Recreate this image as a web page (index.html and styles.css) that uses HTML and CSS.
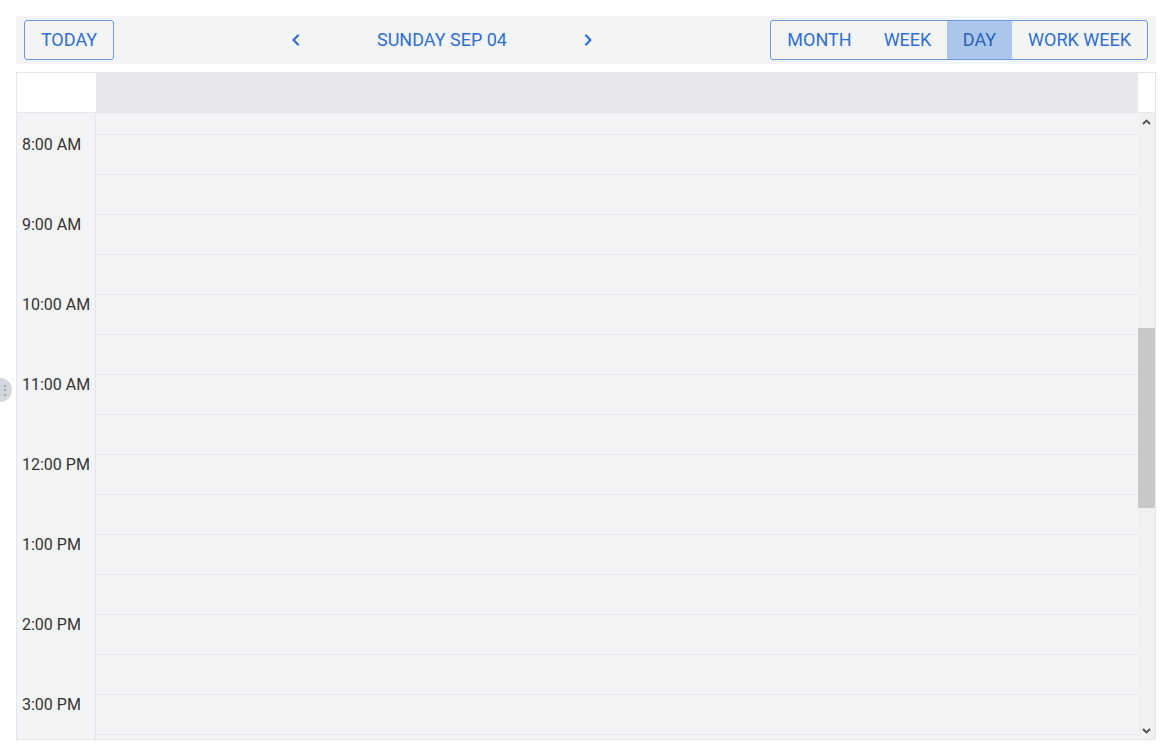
FILE: index.html
```html
<!DOCTYPE html>
<html>
<head>
<meta charset="utf-8">
<link rel="stylesheet" href="styles.css">
</head>
<body>
<div class="page">
  <div class="toolbar">
    <button class="btn today">TODAY</button>
    <div class="nav">
      <button class="navbtn" aria-label="Previous"><svg width="10" height="12" viewBox="0 0 10 12"><polyline points="7,1.5 2.5,6 7,10.5" fill="none" stroke="currentColor" stroke-width="2.2" stroke-linecap="round" stroke-linejoin="round"/></svg></button>
      <div class="title">SUNDAY SEP 04</div>
      <button class="navbtn" aria-label="Next"><svg width="10" height="12" viewBox="0 0 10 12"><polyline points="3,1.5 7.5,6 3,10.5" fill="none" stroke="currentColor" stroke-width="2.2" stroke-linecap="round" stroke-linejoin="round"/></svg></button>
    </div>
    <div class="views">
      <button class="view month">MONTH</button>
      <button class="view week">WEEK</button>
      <button class="view day active">DAY</button>
      <button class="view workweek">WORK WEEK</button>
    </div>
  </div>

  <div class="calendar">
    <div class="head">
      <div class="corner"></div>
      <div class="dayhead"></div>
      <div class="gutter"></div>
    </div>
    <div class="body">
      <div class="viewport">
        <div class="rows">
          <div class="times">
            <div class="halfcell"></div>
            <div class="hour"><span>8:00 AM</span></div>
            <div class="hour"><span>9:00 AM</span></div>
            <div class="hour"><span>10:00 AM</span></div>
            <div class="hour"><span>11:00 AM</span></div>
            <div class="hour"><span>12:00 PM</span></div>
            <div class="hour"><span>1:00 PM</span></div>
            <div class="hour"><span>2:00 PM</span></div>
            <div class="hour"><span>3:00 PM</span></div>
          </div>
          <div class="slots">
            <div class="slot"></div>
            <div class="slot"></div><div class="slot"></div>
            <div class="slot"></div><div class="slot"></div>
            <div class="slot"></div><div class="slot"></div>
            <div class="slot"></div><div class="slot"></div>
            <div class="slot"></div><div class="slot"></div>
            <div class="slot"></div><div class="slot"></div>
            <div class="slot"></div><div class="slot"></div>
            <div class="slot"></div><div class="slot"></div>
          </div>
        </div>
      </div>
      <div class="scrollbar">
        <div class="arrow"><svg width="9" height="6" viewBox="0 0 9 6"><polyline points="1,5 4.5,1.5 8,5" fill="none" stroke="#505050" stroke-width="1.8"/></svg></div>
        <div class="track"><div class="thumb"></div></div>
        <div class="arrow"><svg width="9" height="6" viewBox="0 0 9 6"><polyline points="1,1 4.5,4.5 8,1" fill="none" stroke="#505050" stroke-width="1.8"/></svg></div>
      </div>
    </div>
  </div>
  <div class="handle">&#8942;</div>
</div>
</body>
</html>
```

FILE: styles.css
```css
* { box-sizing: border-box; }
html, body { margin: 0; padding: 0; background: #ffffff; }
body { font-family: Roboto, "Liberation Sans", sans-serif; }

.page {
  position: relative;
  width: 1172px;
  height: 756px;
  padding: 16px;
  overflow: hidden;
}

.toolbar {
  height: 48px;
  background: #f3f4f6;
  display: flex;
  align-items: center;
  justify-content: space-between;
  padding: 0 8px;
}

button {
  font-family: inherit;
  cursor: pointer;
}

.btn.today {
  width: 90px;
  height: 40px;
  border: 1px solid #6c9ae0;
  border-radius: 3px;
  background: transparent;
  color: #2f6fd3;
  font-size: 18px;
  padding: 0 0 2px;
}

.nav {
  display: flex;
  align-items: center;
}
.navbtn {
  width: 32px;
  height: 32px;
  border: none;
  background: transparent;
  color: #2f6fd3;
  display: flex;
  align-items: center;
  justify-content: center;
  padding: 0;
}
.title {
  width: 260px;
  text-align: center;
  color: #2f6fd3;
  font-size: 18px;
  padding-bottom: 2px;
}

.views {
  display: flex;
  height: 40px;
  border: 1px solid #6c9ae0;
  border-radius: 3px;
  overflow: hidden;
}
.view {
  height: 100%;
  border: none;
  background: transparent;
  color: #2f6fd3;
  font-size: 18px;
  padding: 0 0 2px;
}
.view.month { width: 97px; }
.view.week { width: 79px; }
.view.day { width: 65px; }
.view.workweek { width: 135px; }
.view.active {
  background: #abc6ed;
  color: #2a62b8;
}

.calendar {
  margin-top: 8px;
  height: 668px;
  border: 1px solid #e5e7eb;
  display: flex;
  flex-direction: column;
}

.head {
  height: 40px;
  display: flex;
  border-bottom: 1px solid #e5e7eb;
  flex: none;
}
.corner { width: 79px; background: #ffffff; }
.dayhead { flex: 1; background: #e5e7eb; }
.gutter { width: 17px; background: #ffffff; }

.body {
  flex: 1;
  display: flex;
  min-height: 0;
}
.viewport {
  flex: 1;
  overflow: hidden;
  background: #f3f4f6;
}
.rows {
  display: flex;
  margin-top: -19px;
}
.times {
  width: 79px;
  border-right: 1px solid #e5e7eb;
  flex: none;
}
.halfcell { height: 40px; }
.hour {
  height: 80px;
  padding: 1px 0 0 5px;
  font-size: 16px;
  color: #333333;
  line-height: 19px;
}
.slots { flex: 1; }
.slot {
  height: 40px;
  border-top: 1px solid #e5e7eb;
}

.scrollbar {
  width: 17px;
  background: #f1f1f1;
  display: flex;
  flex-direction: column;
  flex: none;
}
.arrow {
  height: 17px;
  display: flex;
  align-items: center;
  justify-content: center;
  flex: none;
}
.track { flex: 1; }
.thumb {
  margin-top: 198px;
  height: 180px;
  background: #c8c8c8;
}

.handle {
  position: absolute;
  left: -12px;
  top: 378px;
  width: 24px;
  height: 24px;
  border-radius: 50%;
  background: #d4d7dd;
  color: #8a8f98;
  font-size: 12px;
  line-height: 24px;
  text-align: right;
  padding-right: 1px;
}
```
